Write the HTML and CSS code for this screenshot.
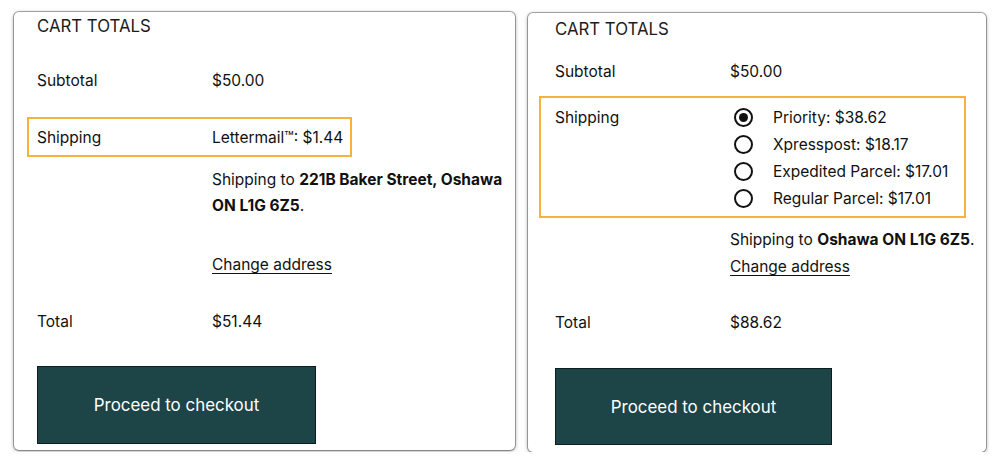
FILE: index.html
```html
<!DOCTYPE html>
<html lang="en">
<head>
<meta charset="utf-8">
<title>Cart totals</title>
<link rel="stylesheet" href="styles.css">
</head>
<body>
<div class="page">
  <section class="card card-left">
    <h2 class="title">CART TOTALS</h2>
    <div class="row row-sub">
      <div class="label">Subtotal</div>
      <div class="value">$50.00</div>
    </div>
    <div class="row highlight hl-left">
      <div class="label">Shipping</div>
      <div class="value">Lettermail™: $1.44</div>
    </div>
    <div class="row row-dest">
      <div class="label"></div>
      <div class="value dest">
        <p class="dest-text">Shipping to <strong>221B Baker Street, Oshawa</strong><br><strong>ON L1G 6Z5</strong>.</p>
        <a class="change change-left" href="#">Change address</a>
      </div>
    </div>
    <div class="row row-total">
      <div class="label">Total</div>
      <div class="value">$51.44</div>
    </div>
    <button class="checkout checkout-left" type="button">Proceed to checkout</button>
  </section>

  <section class="card card-right">
    <h2 class="title title-right">CART TOTALS</h2>
    <div class="row row-sub-right">
      <div class="label">Subtotal</div>
      <div class="value">$50.00</div>
    </div>
    <div class="row highlight hl-right">
      <div class="label label-top">Shipping</div>
      <ul class="methods">
        <li class="method"><span class="radio checked"></span><span>Priority: $38.62</span></li>
        <li class="method"><span class="radio"></span><span>Xpresspost: $18.17</span></li>
        <li class="method"><span class="radio"></span><span>Expedited Parcel: $17.01</span></li>
        <li class="method"><span class="radio"></span><span>Regular Parcel: $17.01</span></li>
      </ul>
    </div>
    <div class="row row-dest-right">
      <div class="label"></div>
      <div class="value dest-right">
        <p class="dest-text-right">Shipping to <strong>Oshawa ON L1G 6Z5</strong>.</p>
        <a class="change" href="#">Change address</a>
      </div>
    </div>
    <div class="row row-total-right">
      <div class="label">Total</div>
      <div class="value">$88.62</div>
    </div>
    <button class="checkout checkout-right" type="button">Proceed to checkout</button>
  </section>
</div>
</body>
</html>
```
FILE: styles.css
```css
* { box-sizing: border-box; }

html, body {
  margin: 0;
  padding: 0;
  background: #ffffff;
}

body {
  font-family: Inter, "Liberation Sans", Arial, sans-serif;
  font-size: 15.5px;
  color: #111111;
}

.page {
  display: flex;
  align-items: flex-start;
  gap: 13px;
  padding: 12px 0 0 14px;
}

.card {
  background: #ffffff;
  border-radius: 5px;
  box-shadow: 0 0 0 1px rgba(0, 0, 0, 0.3), 0 1px 4px rgba(0, 0, 0, 0.4);
  display: flex;
  flex-direction: column;
  align-items: flex-start;
}

.card-left {
  width: 501px;
  height: 438px;
  padding: 2px 0 0 23px;
}

.card-right {
  width: 458px;
  height: 439px;
  margin-top: 1px;
  padding: 4px 0 0 27px;
}

.title {
  margin: 0;
  font-size: 16.8px;
  font-weight: 400;
  line-height: 24px;
  color: #1c1c1c;
}

.row {
  display: flex;
  line-height: 26px;
}

.label {
  width: 175px;
  flex: none;
}

.value { white-space: nowrap; }

.row-sub { margin-top: 30px; }

.highlight {
  border: 2px solid #f7b23b;
  width: fit-content;
}

.hl-left {
  margin-top: 23px;
  margin-left: -10px;
  padding: 6px 7px 4px 8px;
}

.row-dest { margin-top: 10px; }

.dest-text {
  margin: 0;
  line-height: 26px;
}

.change {
  color: #111111;
  text-decoration: underline;
  text-underline-offset: 3px;
  text-decoration-thickness: 1px;
}

.change-left {
  display: block;
  margin-top: 33px;
  line-height: 26px;
  width: fit-content;
}

.row-total { margin-top: 31px; }

.checkout {
  font-family: inherit;
  font-size: 16.9px;
  color: #ffffff;
  background: #1d4548;
  border: 1px solid #0e1e20;
  border-radius: 0;
  cursor: pointer;
  padding: 0;
}

.checkout-left {
  width: 279px;
  height: 78px;
  margin-top: 31px;
}

.row-sub-right { margin-top: 18px; }

.hl-right {
  margin-top: 11px;
  margin-left: -16px;
  padding: 6px 16px 4px 14px;
}

.label-top { line-height: 27px; }

.methods {
  list-style: none;
  margin: 0;
  padding: 0;
}

.method {
  display: flex;
  align-items: center;
  height: 27px;
  white-space: nowrap;
}

.radio {
  width: 19px;
  height: 19px;
  border: 2px solid #111111;
  border-radius: 50%;
  margin: 0 20px 0 4px;
  display: flex;
  align-items: center;
  justify-content: center;
  flex: none;
}

.radio.checked::after {
  content: "";
  width: 9px;
  height: 9px;
  border-radius: 50%;
  background: #111111;
}

.row-dest-right { margin-top: 8px; }

.dest-right { line-height: 27px; }

.dest-text-right { margin: 0; }

.row-total-right { margin-top: 30px; }

.checkout-right {
  width: 277px;
  height: 77px;
  margin-top: 32px;
}
```
